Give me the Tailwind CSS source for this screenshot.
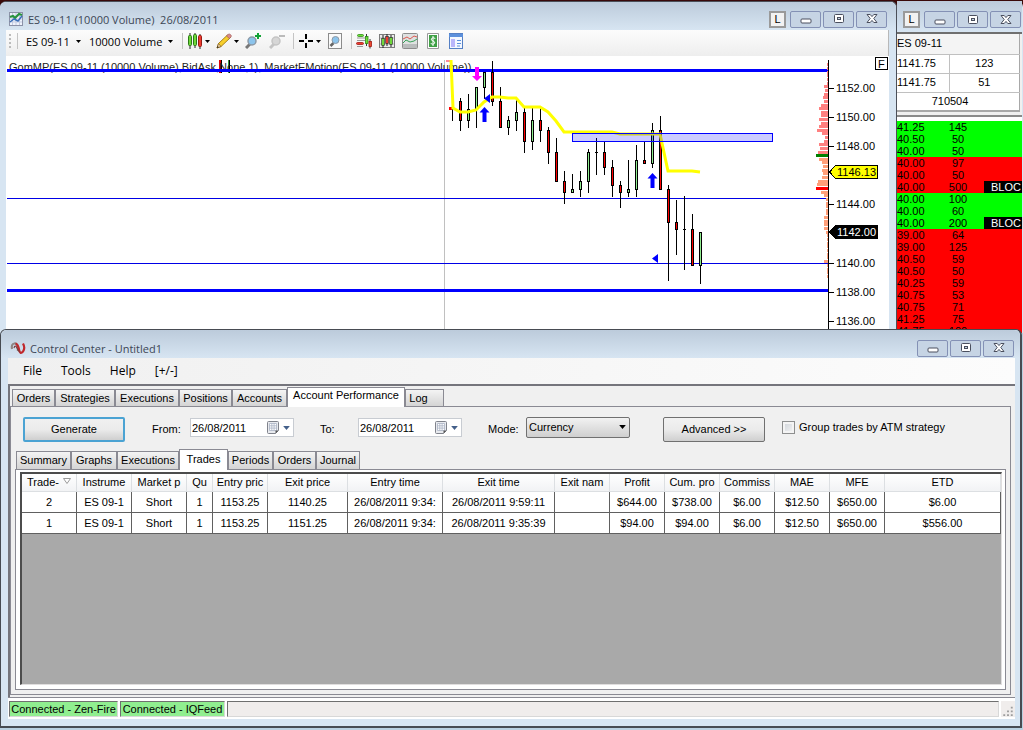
<!DOCTYPE html>
<html lang="en">
<head>
<meta charset="utf-8">
<title>Control Center - Untitled1</title>
<script src="https://cdn.jsdelivr.net/npm/@tailwindcss/browser@4"></script>
</head>
<body class="bg-[#b9d0e0] font-['Liberation_Sans',Arial,sans-serif] text-[11px] text-black leading-none">

<!-- Shared icon shapes -->
<svg class="hidden" aria-hidden="true">
  <symbol id="i-min" viewBox="0 0 12 12"><rect x="1" y="6" width="10" height="4" rx="1" fill="#fff" stroke="#4a4f5e"/></symbol>
  <symbol id="i-max" viewBox="0 0 12 12"><rect x="1.500" y="1.500" width="9" height="8" rx="1" fill="#fff" stroke="#4a4f5e"/><rect x="4.500" y="4.500" width="3" height="2" fill="#c6d4e4" stroke="#4a4f5e"/></symbol>
  <symbol id="i-close" viewBox="0 0 12 12"><path d="M1 1.500h3.200L6 3.600l1.800-2.100H11L7.800 5.500 11 9.500H7.800L6 7.400 4.200 9.500H1l3.200-4z" fill="#fff" stroke="#4a4f5e"/></symbol>
  <symbol id="i-down" viewBox="0 0 5 3"><path d="M0 0h5L2.500 3z" fill="currentColor"/></symbol>
  <symbol id="i-cal" viewBox="0 0 12 13"><path d="M.5 1.500q0-1 1-1h9q1 0 1 1v8l-3 3h-7q-1 0-1-1z" fill="#e8eaee" stroke="#80838c"/><path d="M2.500 2.500h7v7h-7zM2.500 4.800h7M2.500 7.100h7M4.800 2.500v7M7.100 2.500v7" fill="#fff" stroke="#aab2c4" stroke-width=".8"/><path d="M11.500 9.500h-3v3z" fill="#555"/></symbol>
</svg>

<main class="min-h-screen flex flex-col">
  <div class="h-[333px] flex bg-[#3a0a0a] pt-px">

    <!-- Chart window -->
    <section class="flex-1 min-w-0 flex flex-col rounded-t-md border-t border-r border-[#4b4f58] bg-[#d7e5f2]">
      <header class="h-7 shrink-0 flex items-center pl-2 pr-[9px] pt-1.5 rounded-t-md bg-linear-to-b from-[#bccbdb] to-[#d7e5f2]">
        <svg class="size-4 shrink-0" viewBox="0 0 16 16"><rect x="1.500" y="1.500" width="13" height="13" fill="#eef2fb" stroke="#8c92a8"/><path d="M4.500 2v12M8 2v12M11.500 2v12M2 5h12M2 8h12M2 11h12" stroke="#c3cbe2"/><path d="M2 6l3-1 2 2 4-4 3 1" fill="none" stroke="#27923b" stroke-width="2"/><path d="M2 11l4-3 4 2 4-5" fill="none" stroke="#3a6fb8" stroke-width="1.500"/></svg>
        <h1 class="pl-1 flex-1 font-['Open_Sans','Noto_Sans',sans-serif] text-[11px] text-[#3d4756] whitespace-pre">ES 09-11 (10000 Volume)  26/08/2011</h1>
        <button class="w-[17px] h-[17px] border-2 border-[#9a9a9a] bg-[#f2f2f2] mr-1 text-[11px]">L</button>
        <div class="flex gap-0.5">
          <button aria-label="Minimize" class="w-[31px] h-[17px] border border-[#8491b5] rounded-xs bg-[#c6d4e4] flex items-center justify-center"><svg class="size-3"><use href="#i-min"/></svg></button>
          <button aria-label="Maximize" class="w-[31px] h-[17px] border border-[#8491b5] rounded-xs bg-[#c6d4e4] flex items-center justify-center"><svg class="size-3"><use href="#i-max"/></svg></button>
          <button aria-label="Close" class="w-[31px] h-[17px] border border-[#8491b5] rounded-xs bg-[#c6d4e4] flex items-center justify-center"><svg class="size-3"><use href="#i-close"/></svg></button>
        </div>
      </header>

      <div class="ml-1.5 mr-[7px] flex-1 flex flex-col bg-white">
        <div class="h-[26px] shrink-0 flex items-center pl-[3px] pb-1 bg-linear-to-b from-[#fcfcfc] to-[#eeeeee] border-r border-[#b8b8b8] font-['Open_Sans','Noto_Sans',sans-serif] text-[11px]">
          <svg class="w-0.5 h-4 mr-1.5" viewBox="0 0 2 16"><path d="M0 1h2v2H0zM0 5h2v2H0zM0 9h2v2H0zM0 13h2v2H0z" fill="#bbb"/></svg>
          <span class="w-px h-4 bg-[#c4c4c4] mr-2"></span>
          <button class="flex items-center gap-1.5 w-[63px]">ES 09-11<svg class="w-[5px] h-[3px]"><use href="#i-down"/></svg></button>
          <button class="flex items-center gap-1.5 w-[93px]">10000 Volume<svg class="w-[5px] h-[3px]"><use href="#i-down"/></svg></button>
          <span class="w-px h-4 bg-[#c4c4c4] mr-1"></span>
          <button aria-label="Chart style" class="flex items-center gap-0.5 w-[29px]">
            <svg class="w-4 h-4" viewBox="0 0 16 16"><path d="M3 0v16M8 0v15M13 1v15" stroke="#222"/><rect x="1.500" y="2.500" width="3" height="10" rx="1" fill="#6fd83a" stroke="#2c7a16"/><rect x="6.500" y="1.500" width="3" height="11" rx="1" fill="#6fd83a" stroke="#2c7a16"/><rect x="11.500" y="2.500" width="3" height="11" rx="1" fill="#ee3b30" stroke="#971c14"/></svg>
            <svg class="w-[5px] h-[3px]"><use href="#i-down"/></svg>
          </button>
          <button aria-label="Drawing tools" class="flex items-center gap-0.5 w-[29px]">
            <svg class="w-4 h-4" viewBox="0 0 16 16"><path d="M1 15l1.500-4.500L11.500 2l3 2.500L5 13.500z" fill="#f7cf2c" stroke="#a9801a"/><path d="M1 15l1.500-4.500L5 13.500z" fill="#f3d9b0" stroke="#7c5a1f" stroke-width=".7"/><path d="M1 15l.6-2 1.300 1.300z" fill="#222"/><path d="M10.500 3L12.300 1.200q1-.6 2.200.4t.7 2L13.500 5.500z" fill="#d98a8a" stroke="#a06060" stroke-width=".7"/></svg>
            <svg class="w-[5px] h-[3px]"><use href="#i-down"/></svg>
          </button>
          <button aria-label="Zoom in" class="w-6">
            <svg class="w-4 h-4" viewBox="0 0 16 16"><path d="M1 15l4-4" stroke="#777" stroke-width="3"/><circle cx="7" cy="8" r="4" fill="#8cc4ec" stroke="#8c99a6" stroke-width="1.500"/><path d="M13 0v6M10 3h6" stroke="#12a336" stroke-width="2"/></svg>
          </button>
          <button aria-label="Zoom out" class="w-6">
            <svg class="w-4 h-4" viewBox="0 0 16 16"><path d="M1 15l4-4" stroke="#c4c4c4" stroke-width="3"/><circle cx="7" cy="8" r="4" fill="#d6d6d6" stroke="#c4c4c4" stroke-width="1.500"/><path d="M10 3h6" stroke="#bbb" stroke-width="2"/></svg>
          </button>
          <span class="w-px h-4 bg-[#c4c4c4] mr-1"></span>
          <button aria-label="Cross hair" class="flex items-center gap-0.5 w-[29px]">
            <svg class="w-4 h-4" viewBox="0 0 16 16" shape-rendering="crispEdges"><path d="M8 1v5M8 10v5M1 8h5M10 8h5" stroke="#000" stroke-width="2"/></svg>
            <svg class="w-[5px] h-[3px]"><use href="#i-down"/></svg>
          </button>
          <button aria-label="Data box" class="w-6">
            <svg class="w-4 h-4" viewBox="0 0 16 16"><rect x="1.500" y=".5" width="13" height="15" fill="#fafafa" stroke="#8c8c8c"/><path d="M3.500 13l3-3" stroke="#666" stroke-width="2.500"/><circle cx="8.500" cy="7" r="3.500" fill="#8cc4ec" stroke="#8c99a6"/></svg>
          </button>
          <span class="w-px h-4 bg-[#c4c4c4] mr-1"></span>
          <div class="flex gap-[7px]">
            <button aria-label="Chart trader"><svg class="w-4 h-4" viewBox="0 0 16 16"><path d="M1 5h9M1 7.500h8M1 13.500h6" stroke="#999"/><rect x="1.500" y="1.500" width="6" height="2" rx="1" fill="#6fe03a" stroke="#2e8a18" stroke-width=".8"/><rect x=".5" y="9.500" width="7" height="2" rx="1" fill="#ee3b30" stroke="#a01c14" stroke-width=".8"/><path d="M10.500 1v12M14 6v9.500" stroke="#333"/><rect x="9.500" y="3.500" width="2.500" height="7" fill="#6fe03a" stroke="#2e8a18" stroke-width=".8"/><rect x="13" y="8.500" width="2.500" height="5" fill="#ee4b30" stroke="#a01c14" stroke-width=".8"/></svg></button>
            <button aria-label="Data series"><svg class="w-4 h-4" viewBox="0 0 16 16"><rect x=".5" y="1.500" width="15" height="13" fill="#ececec" stroke="#7c7c7c"/><path d="M1 5h14M1 11h14" stroke="#bbb"/><path d="M4 2v13M8 1v12M12 2v12" stroke="#222"/><rect x="2.700" y="5.500" width="2.600" height="7" fill="#6fd83a" stroke="#222" stroke-width=".6"/><rect x="6.700" y="3.500" width="2.600" height="7" fill="#ee3b30" stroke="#222" stroke-width=".6"/><rect x="10.700" y="4.500" width="2.600" height="7" fill="#6fd83a" stroke="#222" stroke-width=".6"/></svg></button>
            <button aria-label="Indicators"><svg class="w-4 h-4" viewBox="0 0 16 16"><rect x=".5" y=".5" width="15" height="15" rx="1" fill="#dfe1e1" stroke="#8c8c8c"/><rect x="1" y="11" width="14" height="4" fill="#b9bcbc"/><path d="M1 6l4-2 3 2 4-3 3 1" fill="none" stroke="#dc5a50"/><path d="M1 10l3-3 4 2 4-1 3-2" fill="none" stroke="#37a159"/></svg></button>
            <button aria-label="Strategies"><svg class="w-4 h-4" viewBox="0 0 16 16"><path d="M2.500.5h11v15h-11z" fill="#fff" stroke="#999"/><rect x="4" y="2" width="8" height="12" fill="#3fa045"/><path d="M10.300 5.500Q8 4 6.600 5.500T8 8t1.400 2.500-3.700 0M8 3v10" fill="none" stroke="#fff"/></svg></button>
            <button aria-label="Properties"><svg class="w-4 h-4" viewBox="0 0 16 16"><rect x="1.500" y=".5" width="13" height="15" fill="#f4f8ff" stroke="#5580c4"/><rect x="1" y="1" width="14" height="3" fill="#5c90dc"/><rect x="3" y="6" width="4" height="8" fill="#b9b6fb"/><path d="M9 7.500h4M9 10.500h4M9 13h3" stroke="#5c90dc"/></svg></button>
          </div>
        </div>

        <!-- Price chart -->
        <svg id="chart" class="w-full h-[275px]" viewBox="6 56 883 275" preserveAspectRatio="xMaxYMin slice" shape-rendering="crispEdges" font-size="11">
          <path d="M444.500 60v271" stroke="#c0c0c0"/>
          <rect x="446" y="60" width="6" height="2" fill="#ff8a9a"/>
          <rect x="219" y="60" width="2" height="13" fill="#e00000"/><path d="M221.500 60v13M229.500 60v13" stroke="#000"/><path d="M228.500 60v13" stroke="#3c9a3c"/>
          <text x="9" y="71" fill="#222">GomMP(ES 09-11 (10000 Volume),BidAsk,None,1), MarketEMotion(ES 09-11 (10000 Volume))</text>
          <path d="M7 198.500h821M7 263.500h821" stroke="#0000e6"/>
          <rect x="7" y="289" width="821" height="3" fill="#0000ff"/>
          <rect x="7" y="69" width="821" height="3" fill="#0000ff"/>
          <g id="candles"></g>
          <g shape-rendering="geometricPrecision">
            <path d="M451 60L453 108 460 112h8l8-2 8-8 8-5h8l8 1h8l8 9h16l8 5 8 9 8 11h48l8 2h40l8 37h24l8 1" fill="none" stroke="#ffff00" stroke-width="3"/>
            <path d="M475 67h4v9h3l-5 5-5-5h3z" fill="#ff00ff"/>
            <path d="M484.500 107l5 5.500h-3v9.500h-4v-9.500h-3zM652.500 173l5 5.500h-3v9.500h-4v-9.500h-3zM490 94v9l-6-4.500zM658 254v9l-6-4.500z" fill="#0000ff"/>
          </g>
          <rect x="572.500" y="133.500" width="200" height="8" fill="#0000ff" fill-opacity=".2" stroke="#0000ff"/>
          <g id="profile"></g>
          <path d="M828.500 60v271M829 88.500h5M829 117.500h5M829 146.500h5M829 204.500h5M829 263.500h5M829 292.500h5M829 321.500h5" stroke="#000"/>
          <g text-anchor="end"><text x="875" y="92">1152.00</text><text x="875" y="121">1150.00</text><text x="875" y="150">1148.00</text><text x="875" y="208">1144.00</text><text x="875" y="267">1140.00</text><text x="875" y="296">1138.00</text><text x="875" y="325">1136.00</text></g>
          <path d="M829.500 172l6-6.500h42v13h-42z" fill="#ffff00" stroke="#000"/>
          <path d="M829.500 232l6-6.500h42v13h-42z" fill="#000" stroke="#000"/>
          <text x="876" y="176" text-anchor="end">1146.13</text>
          <text x="876" y="236" text-anchor="end" fill="#fff">1142.00</text>
          <rect x="875.500" y="57.500" width="12" height="12" fill="#fff" stroke="#000"/><text x="878" y="68">F</text>
        </svg>
      </div>
    </section>

    <!-- Time and sales window -->
    <section class="w-[126px] shrink-0 flex flex-col rounded-tr-md bg-[#d7e5f2] pr-px">
      <header class="h-[31px] shrink-0 flex items-center pl-1.5 pt-1.5 bg-linear-to-b from-[#bccbdb] to-[#d7e5f2]">
        <button class="w-[17px] h-[17px] border-2 border-[#9a9a9a] bg-[#f2f2f2] mr-1 text-[11px]">L</button>
        <div class="flex gap-0.5">
          <button aria-label="Minimize" class="w-[31px] h-[17px] border border-[#8491b5] rounded-xs bg-[#c6d4e4] flex items-center justify-center"><svg class="size-3"><use href="#i-min"/></svg></button>
          <button aria-label="Maximize" class="w-[31px] h-[17px] border border-[#8491b5] rounded-xs bg-[#c6d4e4] flex items-center justify-center"><svg class="size-3"><use href="#i-max"/></svg></button>
          <button aria-label="Close" class="w-[31px] h-[17px] border border-[#8491b5] rounded-xs bg-[#c6d4e4] flex items-center justify-center"><svg class="size-3"><use href="#i-close"/></svg></button>
        </div>
      </header>
      <div class="bg-[#f0f0f0] border-t-2 border-[#6f6f6f] pb-[3px] pr-0.5">
        <table class="w-full table-fixed border-collapse bg-white text-center border-r border-b-2 border-[#a8a8a8]">
          <colgroup><col class="w-[52px]"><col></colgroup>
          <tr class="h-5 bg-[#f4f4f4] border-b border-[#c0c0c0]"><td colspan="2" class="text-left">ES 09-11</td></tr>
          <tr class="h-[19px] border-b border-[#c0c0c0]"><td class="text-left border-r border-[#c0c0c0]">1141.75</td><td>123</td></tr>
          <tr class="h-[19px] border-b border-[#c0c0c0]"><td class="text-left border-r border-[#c0c0c0]">1141.75</td><td>51</td></tr>
          <tr class="h-[19px]"><td colspan="2" class="pr-4">710504</td></tr>
        </table>
      </div>
      <div class="flex-1 min-h-0 overflow-hidden bg-white border-t-2 border-[#8a8a8a] pt-1">
        <table id="tape" class="w-full table-fixed border-separate border-spacing-0"></table>
      </div>
    </section>
  </div>

  <!-- Control Center window -->
  <section class="relative -mt-1 mr-px flex-1 flex flex-col rounded-t-md border-2 border-t border-l border-[#474b52] bg-[#d7e5f2] pb-[7px] mb-0.5">
    <header class="h-7 shrink-0 flex items-center pl-[9px] pr-1.5 pt-2 rounded-t-md bg-linear-to-b from-[#bccbdb] to-[#d7e5f2]">
      <svg class="size-4 shrink-0" viewBox="0 0 16 16" fill="none" stroke-width="2.200"><path d="M2 9Q1 4 4.500 3.500T8 11" stroke="#8f8583"/><path d="M5.500 3.500Q8 4 9 9.500t4 2Q15.500 8 13 3.500" stroke="#c0282c"/><path d="M4 8q1-4 3 0t3 4" stroke="#7d3a3a" stroke-width="1.200"/></svg>
      <h2 class="pl-1 flex-1 font-['Open_Sans','Noto_Sans',sans-serif] text-[11px] text-[#3d4756]">Control Center - Untitled1</h2>
      <div class="flex gap-0.5">
        <button aria-label="Minimize" class="w-[31px] h-[17px] border border-[#8491b5] rounded-xs bg-[#c6d4e4] flex items-center justify-center"><svg class="size-3"><use href="#i-min"/></svg></button>
        <button aria-label="Maximize" class="w-[31px] h-[17px] border border-[#8491b5] rounded-xs bg-[#c6d4e4] flex items-center justify-center"><svg class="size-3"><use href="#i-max"/></svg></button>
        <button aria-label="Close" class="w-[31px] h-[17px] border border-[#8491b5] rounded-xs bg-[#c6d4e4] flex items-center justify-center"><svg class="size-3"><use href="#i-close"/></svg></button>
      </div>
    </header>

    <div class="ml-[7px] mr-[5px] flex-1 flex flex-col bg-[#f0f0f0]">
      <nav class="h-[26px] shrink-0 flex items-center gap-[19px] pl-[15px] bg-linear-to-r from-[#f0f0f0] to-[#fcfcfc] font-['Open_Sans','Noto_Sans',sans-serif] text-[12px]">
        <button>File</button><button>Tools</button><button>Help</button><button>[+/-]</button>
      </nav>

      <div class="flex-1 flex flex-col border-t-2 border-l-2 border-[#75757c] pt-px pr-1 pb-0.5">
        <div class="h-[19px] flex items-end pl-0.5" role="tablist">
          <button class="h-[17px] w-[43px] border border-b-0 border-[#8a8a93] bg-linear-to-b from-[#f4f4f4] to-[#d4d4d4] whitespace-nowrap">Orders</button>
          <button class="h-[17px] w-[60px] border border-b-0 border-[#8a8a93] bg-linear-to-b from-[#f4f4f4] to-[#d4d4d4] whitespace-nowrap">Strategies</button>
          <button class="h-[17px] w-16 border border-b-0 border-[#8a8a93] bg-linear-to-b from-[#f4f4f4] to-[#d4d4d4] whitespace-nowrap">Executions</button>
          <button class="h-[17px] w-[53px] border border-b-0 border-[#8a8a93] bg-linear-to-b from-[#f4f4f4] to-[#d4d4d4] whitespace-nowrap">Positions</button>
          <button class="h-[17px] w-[55px] border border-b-0 border-[#8a8a93] bg-linear-to-b from-[#f4f4f4] to-[#d4d4d4] whitespace-nowrap">Accounts</button>
          <button class="h-5 w-[118px] pb-1 -mb-px z-10 border border-b-0 border-[#8a8a93] bg-white whitespace-nowrap" aria-selected="true" role="tab">Account Performance</button>
          <button class="h-[17px] w-[39px] pr-3 border border-b-0 border-[#8a8a93] bg-linear-to-b from-[#f4f4f4] to-[#d4d4d4] whitespace-nowrap">Log</button>
        </div>

        <div class="flex-1 flex flex-col border border-[#8a8a93] px-1 pb-1">
          <form class="h-[41px] flex items-center pl-2 pt-1" onsubmit="return false">
            <button class="w-[102px] h-[25px] mr-[27px] rounded-xs border-2 border-[#4ba3d3] bg-linear-to-b from-[#f0f0f0] via-[#ebebeb] via-50% to-[#cfcfcf]">Generate</button>
            <label for="from" class="w-[38px]">From:</label>
            <div class="w-[104px] h-[19px] mb-1 flex items-center bg-white border border-[#c8ccd2]">
              <input id="from" value="26/08/2011" class="w-[76px] outline-none text-[11px] pl-px">
              <button aria-label="Open calendar" class="flex items-center gap-1 text-[#44608a]"><svg class="w-3 h-[13px]"><use href="#i-cal"/></svg><svg class="w-[7px] h-1"><use href="#i-down"/></svg></button>
            </div>
            <label for="to" class="w-[38px] ml-[26px]">To:</label>
            <div class="w-[104px] h-[19px] mb-1 flex items-center bg-white border border-[#c8ccd2]">
              <input id="to" value="26/08/2011" class="w-[76px] outline-none text-[11px] pl-px">
              <button aria-label="Open calendar" class="flex items-center gap-1 text-[#44608a]"><svg class="w-3 h-[13px]"><use href="#i-cal"/></svg><svg class="w-[7px] h-1"><use href="#i-down"/></svg></button>
            </div>
            <label for="mode" class="w-[38px] ml-[26px]">Mode:</label>
            <div class="relative mb-1">
              <select id="mode" class="appearance-none w-[104px] h-[21px] pl-0.5 rounded-xs border border-[#707070] bg-linear-to-b from-[#f2f2f2] to-[#cfcfcf]"><option>Currency</option></select>
              <svg class="absolute right-1 top-2 w-[7px] h-1 pointer-events-none"><use href="#i-down"/></svg>
            </div>
            <button class="w-[102px] h-[25px] ml-[33px] mr-[17px] rounded-xs border border-[#707070] bg-linear-to-b from-[#f2f2f2] via-[#ebebeb] via-50% to-[#cfcfcf]">Advanced &gt;&gt;</button>
            <label class="flex items-center gap-1 mb-1 whitespace-nowrap"><input type="checkbox" class="appearance-none size-[13px] border border-[#8e8f8f] bg-linear-to-br from-[#cdd2d8] to-[#f6f6f6] shadow-[inset_0_0_0_2px_#f4f4f4]">Group trades by ATM strategy</label>
          </form>

          <div class="h-[21px] flex items-end pl-px" role="tablist">
            <button class="h-[18px] w-[55px] border border-b-0 border-[#8a8a93] bg-linear-to-b from-[#f4f4f4] to-[#d4d4d4] whitespace-nowrap">Summary</button>
            <button class="h-[18px] w-[46px] border border-b-0 border-[#8a8a93] bg-linear-to-b from-[#f4f4f4] to-[#d4d4d4] whitespace-nowrap">Graphs</button>
            <button class="h-[18px] w-[62px] border border-b-0 border-[#8a8a93] bg-linear-to-b from-[#f4f4f4] to-[#d4d4d4] whitespace-nowrap">Executions</button>
            <button class="h-[21px] w-[49px] pb-0.5 -mb-px z-10 border border-b-0 border-[#8a8a93] bg-white whitespace-nowrap" aria-selected="true" role="tab">Trades</button>
            <button class="h-[18px] w-[45px] border border-b-0 border-[#8a8a93] bg-linear-to-b from-[#f4f4f4] to-[#d4d4d4] whitespace-nowrap">Periods</button>
            <button class="h-[18px] w-[43px] border border-b-0 border-[#8a8a93] bg-linear-to-b from-[#f4f4f4] to-[#d4d4d4] whitespace-nowrap">Orders</button>
            <button class="h-[18px] w-11 border border-b-0 border-[#8a8a93] bg-linear-to-b from-[#f4f4f4] to-[#d4d4d4] whitespace-nowrap">Journal</button>
          </div>

          <div class="flex-1 flex flex-col border border-[#8a8a93] bg-white pt-0.5 pl-1 pr-[3px] pb-1">
            <div class="flex-1 bg-[#a9a9a9] border-t-2 border-l-2 border-[#4c4c4c] border-r border-b border-r-[#e0dede] border-b-[#e0dede]">
              <table id="trades" class="w-full table-fixed border-separate border-spacing-0 bg-white text-center"></table>
            </div>
          </div>
        </div>
      </div>

      <footer class="h-[22px] shrink-0 flex items-stretch gap-0.5 border-t border-[#8a8a93] bg-white pt-[3px] pb-0.5 pl-px">
        <span class="w-[109px] flex items-center justify-center bg-[#90ee90] border border-[#6f6f6f] border-r-[#d8d8d8] border-b-[#d8d8d8] whitespace-nowrap">Connected - Zen-Fire</span>
        <span class="w-[105px] flex items-center justify-center bg-[#90ee90] border border-[#6f6f6f] border-r-[#d8d8d8] border-b-[#d8d8d8] whitespace-nowrap">Connected - IQFeed</span>
        <span class="flex-1 bg-[#f0edec] border border-[#6f6f6f] border-r-[#d8d8d8] border-b-[#d8d8d8]"></span>
        <svg class="w-[14px] self-stretch bg-[#f0edec]" viewBox="0 0 14 17"><path d="M10 6h2v2h-2zM6 10h2v2H6zM10 10h2v2h-2zM2 14h2v2H2zM6 14h2v2H6zM10 14h2v2h-2z" fill="#9c9c9c"/></svg>
      </footer>
    </div>
  </section>
</main>

<script>
// x, wick top, wick bottom, body top, body bottom, direction (r = down, g = up, d = doji)
const candles = [
 [452,108,121,107,110,'r'],[460,98,131,101,121,'r'],[468,94,128,109,121,'g'],[476,87,128,87,110,'g'],[484,72,99,72,88,'g'],
 [492,61,106,72,102,'r'],[500,87,128,101,128,'r'],[508,116,135,120,128,'g'],[516,98,131,112,121,'g'],[524,108,153,112,142,'r'],
 [532,108,150,120,142,'g'],[540,108,142,120,131,'r'],[548,127,164,130,153,'r'],[556,138,182,152,182,'r'],[564,171,204,181,193,'r'],
 [572,174,193,189,193,'g'],[580,171,197,181,190,'g'],[588,149,193,152,182,'g'],[596,138,175,152,153,'d'],[604,142,175,152,168,'r'],
 [612,160,197,167,186,'r'],[620,181,208,185,193,'r'],[628,160,197,189,193,'g'],[636,145,197,160,190,'g'],[644,141,164,160,164,'r'],
 [652,123,168,130,164,'g'],[660,116,190,130,190,'r'],[668,185,281,189,223,'r'],[676,200,255,222,230,'r'],[684,196,270,229,230,'d'],
 [692,214,266,229,266,'r'],[700,232,284,232,266,'g']];
document.getElementById('candles').innerHTML = candles.map(([x,a,b,c,d,k]) =>
  `<rect x="${x}" y="${a}" width="1" height="${b-a}"/><rect x="${x-1}" y="${c}" width="3" height="${d-c}"/>` +
  (k === 'd' ? '' : `<rect x="${x}" y="${c+1}" width="1" height="${d-c-2}" fill="${k==='r'?'#ff0000':'#90ee90'}"/>`)).join('') +
  '<rect x="449" y="107" width="3" height="3" fill="#ff0000"/>';

// Volume at price: y and bar length, bars end at the axis
const up = [[63,1],[67,1],[71,1],[74,1],[78,1],[82,1],[85,4],[89,3],[93,4],[96,5],[100,4],[104,7],[107,9],[111,7],[114,7],[118,9],[122,7],[125,9],[129,11],[132,6],[136,3],[140,4],[143,9],[147,8],[151,10]];
const low = [[158,9],[161,6],[165,5],[169,6],[172,5],[176,6],[180,10],[183,11],[191,7],[194,4],[198,2],[202,2],[205,2],[209,2],[212,2],[216,4],[220,4],[223,4],[227,4],[231,2],[234,1],[238,1],[242,1],[245,1],[249,1],[253,1],[256,1],[260,4],[264,1],[268,1],[271,1],[275,1]];
const bar = (y, n, h, f) => `<rect x="${828-n}" y="${y}" width="${n}" height="${h}" fill="${f}"/>`;
document.getElementById('profile').innerHTML =
  up.map(([y,n]) => bar(y,n,3,'#ff8080')).join('') + low.map(([y,n]) => bar(y,n,3,'#ffa07a')).join('') +
  bar(154,12,3,'#008000') + bar(187,12,3,'#ff0000');

const tape = [['41.25',145,1],['40.50',50,1],['40.00',50,1],['40.00',97,0],['40.00',50,0],['40.00',500,0,1],['40.00',100,1],['40.00',60,1],['40.00',200,1,1],
 ['39.00',64,0],['39.00',125,0],['40.50',59,0],['40.50',50,0],['40.25',59,0],['40.75',53,0],['40.75',71,0],['41.25',75,0],['41.75',100,0]];
document.getElementById('tape').innerHTML = tape.map(([p,q,g,b]) =>
  `<tr class="h-3 ${g ? 'bg-[#00ff00]' : 'bg-[#ff0000]'}"><td class="w-[35px] p-0">${p}</td><td class="w-[52px] p-0 text-center">${q}</td><td class="p-0 pl-[7px] overflow-hidden ${b ? 'bg-black text-white' : ''}">${b ? 'BLOC' : ''}</td></tr>`).join('');

const cols = [['Trade-',55],['Instrume',55],['Market p',55],['Qu',26],['Entry pric',55],['Exit price',80],['Entry time',95],['Exit time',112],['Exit nam',55],['Profit',55],['Cum. pro',55],['Commiss',55],['MAE',55],['MFE',55],['ETD',0]];
const rows = [
 ['2','ES 09-1','Short','1','1153.25','1140.25','26/08/2011 9:34:','26/08/2011 9:59:11','','$644.00','$738.00','$6.00','$12.50','$650.00','$6.00'],
 ['1','ES 09-1','Short','1','1153.25','1151.25','26/08/2011 9:34:','26/08/2011 9:35:39','','$94.00','$94.00','$6.00','$12.50','$650.00','$556.00']];
const sort = '<svg class="inline w-2 h-1.5 ml-1 mb-1" viewBox="0 0 8 6"><path d="M.5.5h7L4 5.500z" fill="#fff" stroke="#999"/></svg>';
document.getElementById('trades').innerHTML =
  '<colgroup>' + cols.map(([,w]) => w ? `<col style="width:${w}px">` : '<col>').join('') + '</colgroup>' +
  '<thead><tr class="h-[18px] bg-linear-to-b from-white to-[#f1f2f4]">' + cols.map(([t],i) =>
    `<th class="p-0 font-normal whitespace-nowrap border-r border-b border-[#dcdfe2]">${t}${i ? '' : sort}</th>`).join('') + '</tr></thead><tbody>' +
  rows.map(r => '<tr class="h-[21px]">' + r.map(c => `<td class="p-0 whitespace-nowrap border-r border-b border-[#606060]">${c}</td>`).join('') + '</tr>').join('') + '</tbody>';
</script>
</body>
</html>
